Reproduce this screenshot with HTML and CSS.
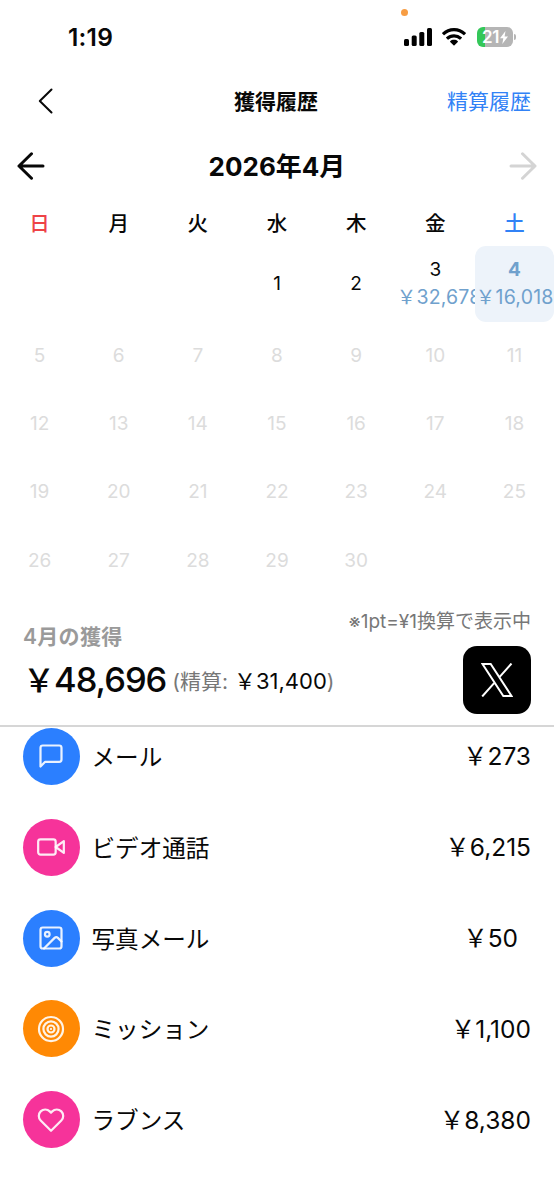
FILE: index.html
```html
<!DOCTYPE html>
<html lang="ja">
<head>
<meta charset="utf-8">
<title>獲得履歴</title>
<link rel="stylesheet" href="styles.css">
</head>
<body>
<div class="status">
  <span class="clock">1:19</span>
  <span class="mic-dot"></span>
  <div class="status-icons">
    <svg class="signal" width="28" height="18" viewBox="0 0 28 18"><rect x="0" y="11" width="5" height="7" rx="1.5"/><rect x="7.7" y="7.5" width="5" height="10.5" rx="1.5"/><rect x="15.3" y="4" width="5" height="14" rx="1.5"/><rect x="23" y="0" width="5" height="18" rx="1.5"/></svg>
    <svg class="wifi" width="24" height="18" viewBox="0 0 24 18"><path d="M12 0C7.400 0 3.200 1.800.2 4.700q-.4.400 0 .8l1.500 1.500q.4.400.8 0A13.700 13.700 0 0 1 21.500 7q.4.400.8 0l1.500-1.500q.4-.4 0-.8A17 17 0 0 0 12 0ZM12 6.200c-3 0-5.800 1.200-7.800 3.100q-.4.400 0 .8l1.500 1.500q.4.400.8 0a8 8 0 0 1 11 0q.4.400.8 0l1.500-1.500q.4-.4 0-.8A11.300 11.300 0 0 0 12 6.200ZM12 11.800c-1.500 0-2.800.5-3.800 1.400q-.4.400 0 .8l3.300 3.300q.5.400 1 0l3.300-3.300q.4-.4 0-.8c-1-.9-2.300-1.400-3.800-1.400Z"/></svg>
    <div class="battery"><span class="level">21</span><svg width="8" height="13" viewBox="0 0 8 13"><path d="M5.500 0 0 7.200h3.300L2.300 13 8 5.500H4.600Z" fill="#fff"/></svg></div>
    <span class="battery-cap"></span>
  </div>
</div>
<header class="nav">
  <svg class="back" width="15" height="26" viewBox="0 0 15 26"><path d="M13.500 1.500 1.800 13l11.700 11.500"/></svg>
  <h1 class="title">獲得履歴</h1>
  <a class="link">精算履歴</a>
</header>
<div class="month">
  <svg class="arrow" width="28" height="28" viewBox="0 0 28 28"><path d="M26 14H2M14.500 1.800 2 14l12.500 12.200"/></svg>
  <h2 class="month-name">2026年4月</h2>
  <svg class="arrow disabled" width="28" height="28" viewBox="0 0 28 28"><path d="M2 14h24M13.500 1.800 26 14 13.500 26.200"/></svg>
</div>
<div class="weekdays"><span class="sun">日</span><span>月</span><span>火</span><span>水</span><span>木</span><span>金</span><span class="sat">土</span></div>
<div class="days">
  <div class="day"></div><div class="day"></div><div class="day"></div><div class="day">1</div><div class="day">2</div>
  <div class="day">3<span class="amount">&#xFFE5;32,678</span></div>
  <div class="day today"><b class="num">4</b><span class="amount">&#xFFE5;16,018</span></div>
  <div class="day off">5</div><div class="day off">6</div><div class="day off">7</div><div class="day off">8</div><div class="day off">9</div><div class="day off">10</div><div class="day off">11</div>
  <div class="day off">12</div><div class="day off">13</div><div class="day off">14</div><div class="day off">15</div><div class="day off">16</div><div class="day off">17</div><div class="day off">18</div>
  <div class="day off">19</div><div class="day off">20</div><div class="day off">21</div><div class="day off">22</div><div class="day off">23</div><div class="day off">24</div><div class="day off">25</div>
  <div class="day off">26</div><div class="day off">27</div><div class="day off">28</div><div class="day off">29</div><div class="day off">30</div>
</div>
<section class="summary">
  <div class="earned">
    <div class="earned-label">4月の獲得</div>
    <div class="earned-line"><span class="total"><span class="yen">&#xFFE5;</span>48,696</span><span class="paid">(精算: <span class="paid-sum">&#xFFE5;31,400</span>)</span></div>
  </div>
  <div class="side">
    <div class="note">※1pt=¥1換算で表示中</div>
    <div class="x-button"><svg width="32" height="34" viewBox="0 0 32 34"><path d="M1.500 1h8.200l20.800 32h-8.200ZM30.500.5 18 14.600M14 19.200 1.200 33.500"/></svg></div>
  </div>
</section>
<ul class="list">
  <li class="row"><span class="icon blue"><svg viewBox="0 0 24 24"><path d="M21 15a2 2 0 0 1-2 2H7l-4 4V5a2 2 0 0 1 2-2h14a2 2 0 0 1 2 2z"/></svg></span><span class="name">メール</span><span class="value">&#xFFE5;273</span></li>
  <li class="row"><span class="icon pink"><svg viewBox="0 0 24 24"><path d="m23 7-7 5 7 5z"/><rect x="1" y="5.500" width="15" height="13" rx="2"/></svg></span><span class="name">ビデオ通話</span><span class="value">&#xFFE5;6,215</span></li>
  <li class="row"><span class="icon blue"><svg viewBox="0 0 24 24"><rect x="3" y="3" width="18" height="18" rx="2"/><circle cx="8.800" cy="8.800" r="2"/><path d="m21 15-3.100-3.100a2 2 0 0 0-2.800 0L6 21"/></svg></span><span class="name">写真メール</span><span class="value short">&#xFFE5;50</span></li>
  <li class="row"><span class="icon orange"><svg viewBox="0 0 24 24"><circle cx="12" cy="12" r="10.300"/><circle cx="12" cy="12" r="6.500"/><circle cx="12" cy="12" r="3"/><circle class="bullseye" cx="12" cy="12" r=".9"/></svg></span><span class="name">ミッション</span><span class="value">&#xFFE5;1,100</span></li>
  <li class="row"><span class="icon pink"><svg viewBox="0 0 24 24"><path d="M20.840 4.610a5.500 5.500 0 0 0-7.780 0L12 5.670l-1.060-1.060a5.500 5.500 0 0 0-7.780 7.780L12 21.230l8.840-8.840a5.500 5.500 0 0 0 0-7.780z"/></svg></span><span class="name">ラブンス</span><span class="value">&#xFFE5;8,380</span></li>
</ul>
</body>
</html>
```

FILE: styles.css
```css
* { box-sizing: border-box; }
body { margin: 0; width: 554px; height: 1199px; overflow: hidden; background: #fff; color: #080808; font-family: Inter, "Noto Sans CJK JP", sans-serif; }
svg { display: block; flex: none; }
h1, h2, ul { margin: 0; padding: 0; }

.status { position: relative; display: flex; justify-content: space-between; align-items: center; height: 74px; padding: 0 38px 0 68px; }
.clock { font-size: 24.500px; font-weight: 600; letter-spacing: .2px; }
.mic-dot { position: absolute; left: 401px; top: 9px; width: 7px; height: 7px; border-radius: 50%; background: #f79d43; }
.status-icons { display: flex; align-items: center; }
.wifi { margin: 0 11px 0 10px; }
.battery { display: flex; align-items: center; justify-content: center; gap: 1px; width: 36px; height: 20px; border-radius: 6px; color: #fff; background: linear-gradient(90deg, #34c759 22%, #b5b5b5 22%); }
.level { font-size: 17px; font-weight: 600; line-height: 20px; letter-spacing: -.5px; }
.battery-cap { width: 2px; height: 6px; margin-left: 1px; border-radius: 0 2px 2px 0; background: #b5b5b5; }

.nav { display: grid; grid-template-columns: 211px auto 1fr; align-items: center; height: 54px; padding: 0 23px 0 38px; }
.back, .arrow { fill: none; stroke: #080808; stroke-width: 2; stroke-linecap: round; stroke-linejoin: round; }
.title { padding-top: 2px; font-size: 21px; font-weight: 700; line-height: 30px; margin-left: -15px; }
.link { justify-self: end; padding-top: 2px; color: #3182f6; font-size: 21px; font-weight: 400; line-height: 30px; }

.month { display: flex; align-items: center; justify-content: space-between; height: 76px; padding: 0 17px; }
.month-name { padding-top: 2px; font-size: 26px; font-weight: 700; line-height: 36px; }
.arrow { stroke-width: 3; }
.disabled { stroke: #d4d4d4; }

.weekdays { display: grid; grid-template-columns: repeat(7, 1fr); height: 42px; line-height: 39px; text-align: center; font-size: 20.500px; font-weight: 500; }
.sun { color: #ee4347; }
.sat { color: #3182f6; }
.days { display: grid; grid-template-columns: repeat(7, minmax(0, 1fr)); grid-template-rows: 76px repeat(4, 68.200px); font-size: 19px; }
.day { display: flex; flex-direction: column; align-items: center; justify-content: center; line-height: 28px; min-width: 0; overflow: hidden; }
.off { color: #dcdcdc; }
.amount { width: 100%; height: 28px; padding-left: 1px; color: #70a1cd; font-size: 19.500px; line-height: 27px; letter-spacing: .2px; white-space: nowrap; }
.today { border-radius: 11px; background: #edf3fa; }
.num { color: #70a1cd; font-weight: 700; }

.summary { display: flex; justify-content: space-between; height: 132px; padding: 0 23px; border-bottom: 2px solid #d6d6d6; }
.earned-label { margin-top: 27px; color: #9a9a9a; font-size: 21px; font-weight: 600; line-height: 30px; letter-spacing: .3px; }
.earned-line { display: flex; align-items: center; height: 58px; white-space: nowrap; }
.total { font-size: 34.500px; font-weight: 500; letter-spacing: -1px; line-height: 50px; }
.yen { font-size: 32px; }
.paid { margin-left: 6px; padding-top: 2px; color: #777; font-size: 21px; line-height: 32px; }
.paid-sum { color: #080808; font-size: 22px; }
.side { display: flex; flex-direction: column; align-items: flex-end; }
.note { margin-top: 12px; color: #777; font-size: 19px; line-height: 30px; white-space: nowrap; }
.x-button { display: flex; align-items: center; justify-content: center; width: 68px; height: 68px; margin-top: 9.500px; border-radius: 14px; background: #000; }
.x-button svg { fill: none; stroke: #fff; stroke-width: 2; }

.list { padding-top: 1px; list-style: none; }
.row { display: flex; align-items: center; height: 57px; margin-bottom: 33.900px; padding: 0 23px; font-size: 24.500px; }
.icon { display: flex; align-items: center; justify-content: center; width: 57px; height: 57px; border-radius: 50%; }
.icon svg { width: 28px; height: 28px; margin-right: 1px; fill: none; stroke: #fff; stroke-opacity: .9; stroke-width: 1.900; stroke-linecap: round; stroke-linejoin: round; }
.icon .bullseye { fill: #fff; stroke: none; }
.blue { background: #2b7fff; }
.pink { background: #f6339a; }
.orange { background: #ff8904; }
.name { margin-left: 11.500px; padding-top: 3px; font-size: 23.600px; line-height: 36px; }
.value { margin-left: auto; line-height: 36px; }
.short { margin-right: 13px; }
```
